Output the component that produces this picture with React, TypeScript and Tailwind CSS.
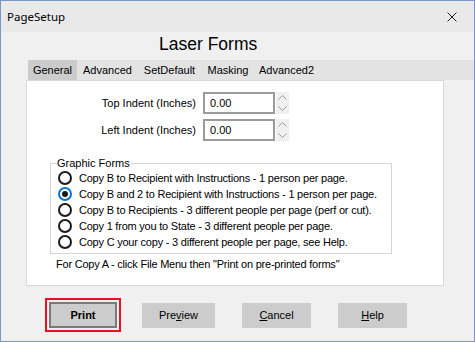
const tabs = [
  { label: "General", w: "w-[49px]", active: true },
  { label: "Advanced", w: "w-[61px]", active: false },
  { label: "SetDefault", w: "w-[63px]", active: false },
  { label: "Masking", w: "w-[54px]", active: false },
  { label: "Advanced2", w: "w-[63px]", active: false },
];

const forms = [
  "Copy B to Recipient with Instructions - 1 person per page.",
  "Copy B and 2 to Recipient with Instructions - 1 person per page.",
  "Copy B to Recipients - 3 different people per page (perf or cut).",
  "Copy 1 from you to State - 3 different people per page.",
  "Copy C your copy - 3 different people per page, see Help.",
];

function Spinner() {
  return (
    <div className="flex h-[22px] w-[13px] flex-col bg-[#f0f0f0]">
      <div className="flex flex-1 items-center justify-center">
        <svg width="9" height="5" viewBox="0 0 9 5" fill="none">
          <path d="M0.5 4.5L4.5 0.5L8.5 4.5" stroke="#9a9a9a" strokeWidth="1" />
        </svg>
      </div>
      <div className="flex flex-1 items-center justify-center">
        <svg width="9" height="5" viewBox="0 0 9 5" fill="none">
          <path d="M0.5 0.5L4.5 4.5L8.5 0.5" stroke="#9a9a9a" strokeWidth="1" />
        </svg>
      </div>
    </div>
  );
}

function IndentRow({ label }: { label: string }) {
  return (
    <div className="flex h-[22px] items-center">
      <span className="w-[170px] pr-px text-right">{label}</span>
      <div className="ml-[6px] flex h-[22px] w-[72px] items-center border-2 border-[#9b9b9b] bg-white pl-[5px]">0.00</div>
      <div className="ml-px">
        <Spinner />
      </div>
    </div>
  );
}

function Radio({ checked }: { checked: boolean }) {
  return checked ? (
    <span className="flex h-[14px] w-[14px] items-center justify-center rounded-full border-2 border-[#0078d7] bg-white">
      <span className="h-[6px] w-[6px] rounded-full bg-[#1a1a1a]" />
    </span>
  ) : (
    <span className="h-[14px] w-[14px] rounded-full border-2 border-[#1a1a1a] bg-white" />
  );
}

function Btn({ children, w }: { children: React.ReactNode; w: string }) {
  return (
    <button className={`flex h-[25px] ${w} items-center justify-center bg-[#cccccc] text-[11px] text-black`}>
      {children}
    </button>
  );
}

export default function App() {
  return (
    <div className="flex h-[342px] w-[475px] flex-col border border-[#7a96c8] bg-[#f0f0f0] font-['Liberation_Sans',Arial,sans-serif] text-[11px] leading-[13px] text-black">
      <div className="flex h-[31px] shrink-0 items-center justify-between bg-[#e9e9e9] pl-[6px] pr-[17px]">
        <span className="font-['Noto_Sans',sans-serif] text-[11.5px] leading-[16px]">PageSetup</span>
        <svg width="10" height="10" viewBox="0 0 10 10" fill="none">
          <path d="M0.5 0.5L9.5 9.5M9.5 0.5L0.5 9.5" stroke="#222" strokeWidth="1" />
        </svg>
      </div>

      <div className="mt-[2px] pl-[158px] text-[17.5px] leading-[20px]">Laser Forms</div>

      <div className="ml-[27px] mt-[6px] flex h-[20px] bg-[#e3e3e3]">
        {tabs.map((t) => (
          <div key={t.label} className={`flex ${t.w} items-center justify-center ${t.active ? "bg-[#cccccc]" : ""}`}>
            {t.label}
          </div>
        ))}
      </div>

      <div className="ml-[25px] flex h-[206px] w-[418px] flex-col border border-[#d9d9d9] bg-white">
        <div className="mt-[11px] flex flex-col gap-[5px]">
          <IndentRow label="Top Indent (Inches)" />
          <IndentRow label="Left Indent (Inches)" />
        </div>

        <fieldset className="ml-[23px] mt-[16px] w-[342px] border border-[#d5d5d5] pb-[3px] pl-[6px]">
          <legend className="leading-[13px]">Graphic Forms</legend>
          {forms.map((f, i) => (
            <label key={f} className="-ml-[6px] flex h-[16px] items-center pl-[7px]">
              <Radio checked={i === 1} />
              <span className="ml-[7px] tracking-[-0.22px]">{f}</span>
            </label>
          ))}
        </fieldset>

        <div className="ml-[29px] mt-[4px] tracking-[-0.22px]">For Copy A - click File Menu then "Print on pre-printed forms"</div>
      </div>

      <div className="flex items-center pl-[44px] pt-[12px]">
        <div className="border-2 border-[#e81123] p-[2px]">
          <button className="flex h-[26px] w-[68px] items-center justify-center border-2 border-[#7a7a7a] bg-[#cccccc] text-[11px] font-bold">
            Print
          </button>
        </div>
        <div className="ml-[21px]">
          <Btn w="w-[73px]">
            Pre<span className="underline">v</span>iew
          </Btn>
        </div>
        <div className="ml-[27px]">
          <Btn w="w-[69px]">
            <span className="underline">C</span>ancel
          </Btn>
        </div>
        <div className="ml-[27px]">
          <Btn w="w-[69px]">
            <span className="underline">H</span>elp
          </Btn>
        </div>
      </div>
    </div>
  );
}
